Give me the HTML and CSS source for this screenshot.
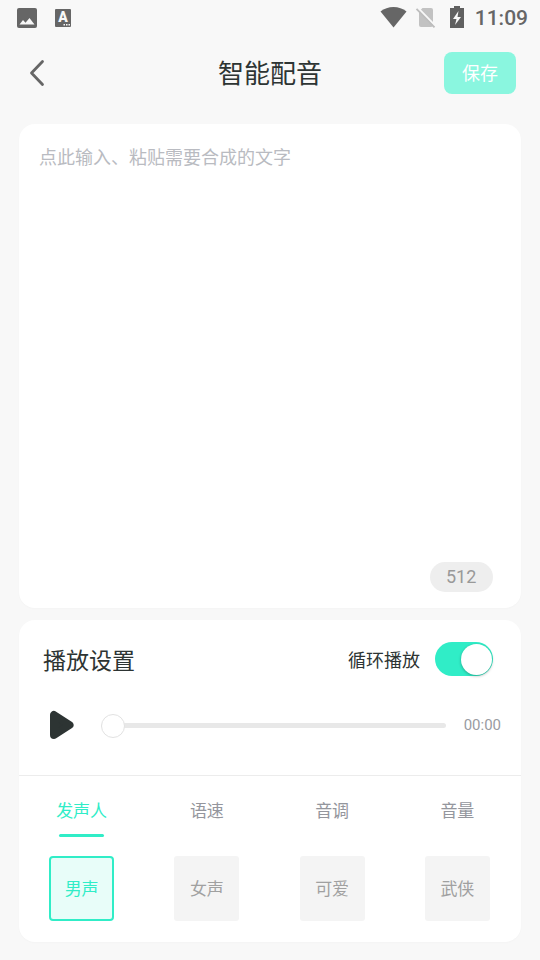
FILE: index.html
```html
<!DOCTYPE html>
<html lang="zh-CN">
<head>
<meta charset="utf-8">
<meta name="viewport" content="width=device-width, initial-scale=1">
<title>智能配音</title>
<link rel="stylesheet" href="styles.css">
</head>
<body>
<div class="status-bar">
  <svg width="20" height="20" viewBox="0 0 20 20" aria-hidden="true">
    <rect width="20" height="20" rx="2" fill="#666"/>
    <path d="M2.500 16.500 6 12l2.500 2.800L12.500 10l5 6.500z" fill="#f8f8f8"/>
  </svg>
  <svg class="lang-badge" width="16" height="18" viewBox="0 0 16 18" aria-hidden="true">
    <rect width="16" height="18" rx="1" fill="#666"/>
    <text class="lang-letter" x="8" y="13" text-anchor="middle">A</text>
    <path d="M8.500 15h1.500v1.500H8.500zM11 15h1.500v1.500H11zM13.500 15H15v1.500h-1.500z" fill="#f8f8f8"/>
  </svg>
  <div class="status-right">
    <svg width="28" height="22" viewBox="0 0 28 22" aria-hidden="true">
      <path d="M.5 5.500C7.500-.5 19.500-.5 26.500 5.500L13.500 21.500z" fill="#666"/>
    </svg>
    <svg class="sim" width="22" height="22" viewBox="0 0 22 22" aria-hidden="true">
      <path d="M4 5.500 7.500 2H16q2 0 2 2v15q0 2-2 2H6q-2 0-2-2z" fill="#c2c2c2"/>
      <path d="M2.500 1.500 21 20.500" stroke="#f8f8f8" stroke-width="2"/>
      <path d="M1.500 2.800 19.500 21.300" stroke="#bdbdbd" stroke-width="1.800"/>
    </svg>
    <svg width="14" height="22" viewBox="0 0 14 22" aria-hidden="true">
      <path d="M0 2h4V0h6v2h4v20H0z" fill="#606060"/>
      <path d="M8.500 5 3 13h3.500l-1.500 6L11 11H7.500z" fill="#f8f8f8"/>
    </svg>
    <time class="clock">11:09</time>
  </div>
</div>

<header class="header">
  <button class="back" type="button" aria-label="返回">
    <svg width="16" height="28" viewBox="0 0 16 28" aria-hidden="true">
      <path d="M13.500 2.500 2.500 14l11 11.500" fill="none" stroke="#666" stroke-width="2.800" stroke-linecap="round" stroke-linejoin="round"/>
    </svg>
  </button>
  <h1 class="title">智能配音</h1>
  <button class="save" type="button">保存</button>
</header>

<main class="main">
  <section class="card editor">
    <textarea class="editor-input" aria-label="合成文字" placeholder="点此输入、粘贴需要合成的文字"></textarea>
    <span class="counter">512</span>
  </section>

  <section class="card">
    <div class="settings-head">
      <h2 class="settings-title">播放设置</h2>
      <label class="loop" for="loop">循环播放</label>
      <input class="switch" id="loop" type="checkbox" role="switch" checked>
    </div>
    <div class="player">
      <button class="play" type="button" aria-label="播放">
        <svg width="26" height="30" viewBox="0 0 26 30" aria-hidden="true">
          <path d="M5 5v20L20.500 15z" fill="#2d3433" stroke="#2d3433" stroke-width="8" stroke-linejoin="round"/>
        </svg>
      </button>
      <input class="seek" type="range" min="0" max="100" value="0" aria-label="播放进度">
      <time class="elapsed">00:00</time>
    </div>
    <nav class="tabs">
      <button class="tab active" type="button">发声人</button>
      <button class="tab" type="button">语速</button>
      <button class="tab" type="button">音调</button>
      <button class="tab" type="button">音量</button>
    </nav>
    <div class="voices">
      <button class="voice selected" type="button">男声</button>
      <button class="voice" type="button">女声</button>
      <button class="voice" type="button">可爱</button>
      <button class="voice" type="button">武侠</button>
    </div>
  </section>
</main>
</body>
</html>
```

FILE: styles.css
```css
* {
  box-sizing: border-box;
}

body {
  margin: 0;
  min-height: 100vh;
  display: flex;
  flex-direction: column;
  background: #f8f8f8;
  color: #2d3433;
  font-family: Roboto, "Noto Sans CJK SC", sans-serif;
}

button {
  border: 0;
  padding: 0;
  background: none;
  font: inherit;
  color: inherit;
}

svg {
  display: block;
}

.status-bar {
  display: flex;
  align-items: center;
  gap: 18px;
  height: 36px;
  padding: 0 12px 0 17px;
}

.lang-letter {
  fill: #f8f8f8;
  font-size: 14px;
  font-weight: 900;
}

.status-right {
  display: flex;
  align-items: center;
  height: 34px;
  margin-left: auto;
  margin-bottom: 2px;
}

.sim {
  margin: 0 13px 0 7px;
}

.clock {
  margin-left: 11px;
  padding-top: 2px;
  color: #666;
  font-size: 21px;
  font-weight: 500;
  line-height: 24px;
}

.header {
  display: grid;
  grid-template-columns: 72px 1fr 72px;
  align-items: center;
  padding: 16px 24px 30px;
}

.back {
  display: flex;
  align-items: center;
  height: 42px;
  padding-left: 5px;
}

.title {
  margin: 0;
  font-size: 26px;
  font-weight: 400;
  line-height: 44px;
  height: 42px;
  text-align: center;
}

.save {
  height: 42px;
  border-radius: 8px;
  padding-bottom: 2px;
  background: #8af6df;
  color: #fff;
  font-size: 18px;
}

.main {
  flex: 1;
  display: flex;
  flex-direction: column;
  gap: 12px;
  padding: 0 19px 18px;
}

.card {
  border-radius: 16px;
  background: #fff;
  box-shadow: 0 1px 2px rgba(0, 0, 0, 0.02);
}

.editor {
  flex: 1;
  display: flex;
  flex-direction: column;
  padding: 20px 28px 16px 20px;
}

.editor-input {
  flex: 1;
  padding: 0;
  border: 0;
  outline: 0;
  resize: none;
  background: transparent;
  color: inherit;
  font: inherit;
  font-size: 18px;
  line-height: 28px;
}

.editor-input::placeholder {
  color: #b9bbc1;
}

.counter {
  align-self: flex-end;
  min-width: 63px;
  padding: 0 16px;
  border-radius: 15px;
  background: #eee;
  color: #999;
  font-size: 18px;
  line-height: 30px;
}

.settings-head {
  display: flex;
  align-items: center;
  height: 78px;
  padding: 0 28px 0 24px;
}

.settings-title {
  flex: 1;
  margin: 0;
  font-size: 23px;
  font-weight: 400;
}

.loop {
  margin-right: 15px;
  font-size: 18px;
}

.switch {
  appearance: none;
  display: flex;
  align-items: center;
  justify-content: flex-end;
  width: 58px;
  height: 34px;
  margin: 0;
  padding: 1px;
  border-radius: 17px;
  background: #30edc7;
}

.switch::before {
  content: "";
  width: 31px;
  height: 31px;
  border-radius: 50%;
  background: #fff;
  box-shadow: 0 1px 3px rgba(0, 0, 0, 0.3);
}

.switch:not(:checked) {
  justify-content: flex-start;
  background: #ddd;
}

.player {
  display: flex;
  align-items: center;
  height: 78px;
  padding: 0 20px 23px 30px;
  border-bottom: 1px solid #ececec;
}

.seek {
  appearance: none;
  flex: 1;
  min-width: 0;
  height: 24px;
  margin: 0 18px 0 26px;
  background: transparent;
}

.seek::-webkit-slider-runnable-track {
  height: 5px;
  border-radius: 3px;
  background: #e8e8e8;
}

.seek::-webkit-slider-thumb {
  appearance: none;
  width: 24px;
  height: 24px;
  margin-top: -9px;
  border: 1px solid #e2e2e2;
  border-radius: 50%;
  background: #fff;
}

.elapsed {
  color: #999ba2;
  font-size: 15px;
}

.tabs,
.voices {
  display: grid;
  grid-template-columns: repeat(4, 1fr);
  justify-items: center;
  padding-right: 1px;
}

.tabs {
  padding-top: 23px;
}

.tab {
  display: flex;
  flex-direction: column;
  align-items: center;
  gap: 10px;
  color: #94969d;
  font-size: 17px;
  line-height: 25px;
}

.tab::after {
  content: "";
  width: 45px;
  height: 3px;
  border-radius: 2px;
}

.tab.active {
  color: #30edc7;
}

.tab.active::after {
  background: #30edc7;
}

.voices {
  padding-top: 19px;
  padding-bottom: 21px;
}

.voice {
  width: 65px;
  height: 65px;
  padding-bottom: 2px;
  border-radius: 3px;
  background: #f4f4f4;
  color: #a0a0a0;
  font-size: 17px;
}

.voice.selected {
  border: 2px solid #30edc7;
  border-radius: 4px;
  background: #e8fdf9;
  color: #30edc7;
}
```
